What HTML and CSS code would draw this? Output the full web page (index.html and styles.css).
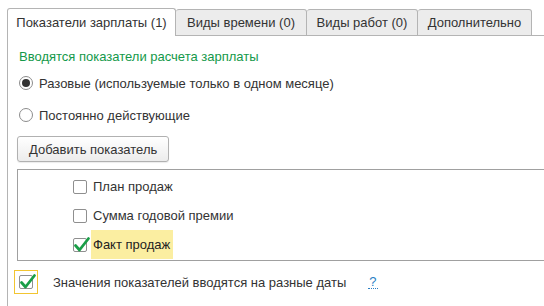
FILE: index.html
```html
<!DOCTYPE html>
<html lang="ru">
<head>
<meta charset="utf-8">
<link rel="stylesheet" href="styles.css">
</head>
<body>
<div class="page">
  <div class="tabs">
    <div class="tab active t1">Показатели зарплаты (1)</div>
    <div class="tab t2">Виды времени (0)</div>
    <div class="tab t3">Виды работ (0)</div>
    <div class="tab t4">Дополнительно</div>
    <div class="tab-fill"></div>
  </div>
  <div class="panel">
    <div class="title">Вводятся показатели расчета зарплаты</div>
    <label class="radio-row r1"><span class="radio checked"></span><span>Разовые (используемые только в одном месяце)</span></label>
    <label class="radio-row r2"><span class="radio"></span><span>Постоянно действующие</span></label>
    <button class="btn">Добавить показатель</button>
    <div class="list">
      <div class="item"><span class="cb"></span><span class="item-text">План продаж</span></div>
      <div class="item"><span class="cb"></span><span class="item-text">Сумма годовой премии</span></div>
      <div class="item"><span class="cb"><svg class="check" viewBox="0 0 18 18" width="18" height="18"><path d="M2.5 9.5 L6.5 14 L15.5 2.5" fill="none" stroke="#1a9e48" stroke-width="2.8" stroke-linecap="round" stroke-linejoin="round"/></svg></span><span class="item-text current">Факт продаж</span></div>
    </div>
    <div class="bottom">
      <span class="focus"><span class="cb"><svg class="check" viewBox="0 0 18 18" width="18" height="18"><path d="M2.5 9.5 L6.5 14 L15.5 2.5" fill="none" stroke="#1a9e48" stroke-width="2.8" stroke-linecap="round" stroke-linejoin="round"/></svg></span></span>
      <span class="bottom-text">Значения показателей вводятся на разные даты</span>
      <span class="help">?</span>
    </div>
  </div>
</div>
</body>
</html>
```

FILE: styles.css
```css
* { box-sizing: border-box; }
html, body { margin: 0; padding: 0; background: #fff; }
body {
  font-family: "Liberation Sans", Arial, sans-serif;
  font-size: 13px;
  color: #333;
  width: 544px;
  height: 306px;
  overflow: hidden;
}
.page { padding: 8px 0 0 7px; }
.tabs {
  display: flex;
  align-items: flex-end;
  height: 28px;
}
.tab {
  height: 27px;
  line-height: 25px;
  padding: 0;
  text-align: center;
  border: 1px solid #b4b4b4;
  border-left: none;
  border-radius: 3px 3px 0 0;
  background: #ececec;
  white-space: nowrap;
  flex: none;
}
.tab.active {
  height: 28px;
  line-height: 27px;
  border-left: 1px solid #b4b4b4;
  border-bottom: none;
  background: #fff;
}
.t1 { width: 169px; }
.t2 { width: 131px; }
.t3 { width: 111px; }
.t4 { width: 114px; }
.tab-fill {
  flex: 1;
  border-bottom: 1px solid #b4b4b4;
  height: 1px;
}
.panel {
  border-left: 1px solid #b4b4b4;
  padding: 13px 0 20px 11px;
  display: flex;
  flex-direction: column;
  align-items: flex-start;
}
.title {
  color: #14994a;
  height: 16px;
  line-height: 16px;
}
.radio-row {
  display: flex;
  align-items: center;
  height: 24px;
  gap: 6px;
}
.r1 { margin-top: 6px; }
.r2 { margin-top: 8px; }
.radio {
  width: 14px;
  height: 14px;
  border: 1px solid #8c8c8c;
  border-radius: 50%;
  background: #fff;
  display: flex;
  align-items: center;
  justify-content: center;
}
.radio.checked::after {
  content: "";
  width: 8px;
  height: 8px;
  border-radius: 50%;
  background: #333;
}
.btn {
  margin-top: 9px;
  margin-left: -2px;
  height: 26px;
  padding: 0 11px;
  font: inherit;
  color: #333;
  border: 1px solid #b1b1b1;
  border-radius: 3px;
  background: linear-gradient(#ffffff, #ececec);
  box-shadow: 0 1px 1px rgba(0,0,0,0.08);
}
.list {
  margin-top: 7px;
  margin-left: -2px;
  width: 527px;
  height: 92px;
  border: 1px solid #a0a0a0;
  border-right: none;
  padding: 2px 0 0 55px;
}
.item {
  display: flex;
  align-items: center;
  height: 29px;
}
.cb {
  position: relative;
  width: 14px;
  height: 14px;
  border: 1px solid #8f8f8f;
  border-radius: 2px;
  background: #fff;
  flex: none;
}
.check {
  position: absolute;
  left: -1px;
  top: -3px;
}
.item-text {
  margin-left: 4px;
  padding: 0 2px;
  height: 29px;
  line-height: 29px;
}
.item-text.current {
  background: #fbeea1;
  color: #222;
  padding: 0 3px 0 2px;
}
.bottom {
  margin-top: 9px;
  margin-left: -5px;
  display: flex;
  align-items: center;
  height: 24px;
}
.focus {
  width: 24px;
  height: 24px;
  border: 1px solid #f2c531;
  display: flex;
  align-items: center;
  justify-content: center;
}
.bottom-text { margin-left: 15px; }
.help {
  margin-left: 22px;
  color: #2a7fc4;
  border-bottom: 1px dotted #2a7fc4;
  line-height: 13px;
  padding: 0 1px;
}
```
